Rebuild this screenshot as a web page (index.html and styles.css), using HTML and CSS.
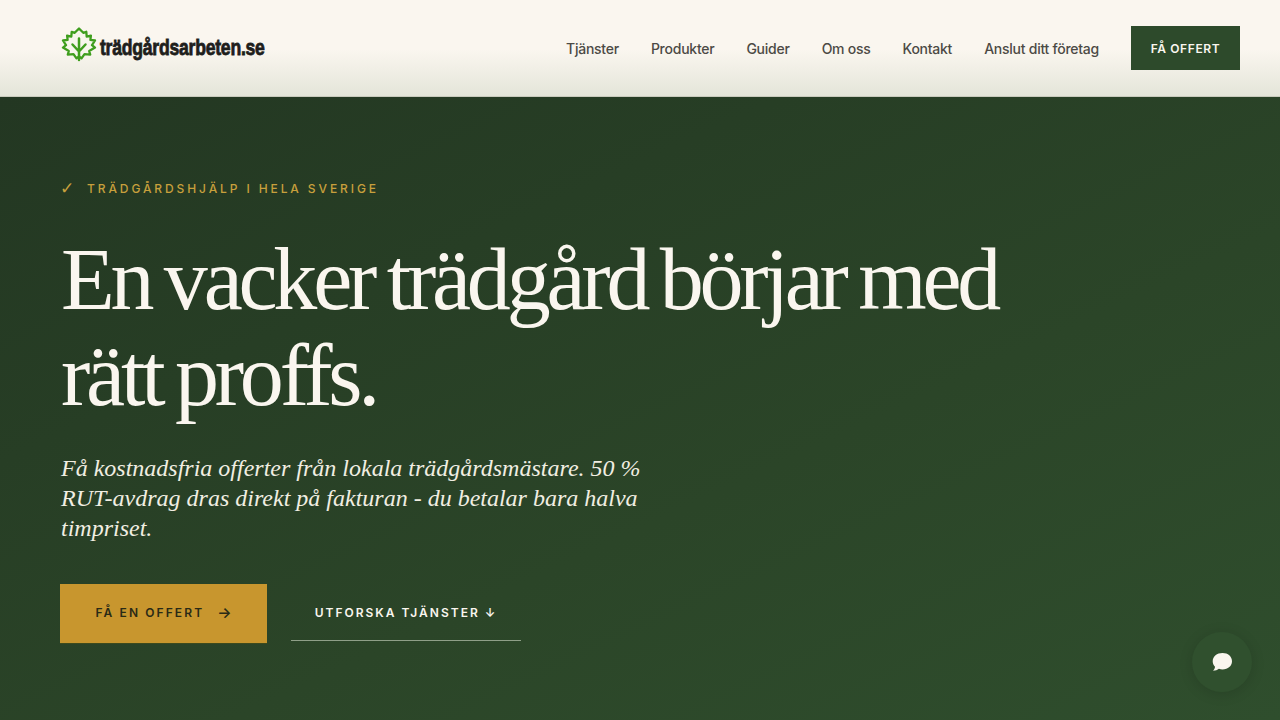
FILE: index.html
```html
<!DOCTYPE html>
<html lang="sv">
<head>
<meta charset="utf-8">
<meta name="viewport" content="width=device-width, initial-scale=1.0">
<title>trädgårdsarbeten.se</title>
<link rel="stylesheet" href="styles.css">
</head>
<body>
	<header class="site_header">
		<a class="logo" href="#">
			<svg class="logo_icon" viewBox="0 0 36 36" width="36" height="36" aria-hidden="true">
				<path d="M18 1.500l4.300 4.300 3-1 .4 4.800 4.200-1-.5 4.300 4.600.6-3 4.700 3 2.400-5.800 3.400 1 3.600-5.700-.5-3 4.300-2.500-2-2.500 2-3-4.300-5.700.5 1-3.600-5.800-3.400 3-2.400-3-4.700 4.600-.6-.5-4.300 4.200 1 .4-4.800 3 1z" fill="#f7f6ec" stroke="#3f9e1e" stroke-width="2.300" stroke-linejoin="round"/>
				<path d="M18 33V11.500M18 24.500l-6.500-7M18 24.500l6.500-7" fill="none" stroke="#3f9e1e" stroke-width="2.500" stroke-linecap="round"/>
			</svg>
			<span class="logo_text">trädgårdsarbeten.se</span>
		</a>
		<nav class="main_nav">
			<a href="#">Tjänster</a>
			<a href="#">Produkter</a>
			<a href="#">Guider</a>
			<a href="#">Om oss</a>
			<a href="#">Kontakt</a>
			<a href="#">Anslut ditt företag</a>
			<a class="nav_cta" href="#">FÅ OFFERT</a>
		</nav>
	</header>

	<main class="hero">
		<p class="eyebrow"><span class="eyebrow_check">✓</span>TRÄDGÅRDSHJÄLP I HELA SVERIGE</p>
		<h1 class="hero_title">En vacker trädgård börjar med rätt proffs.</h1>
		<p class="hero_lead">Få kostnadsfria offerter från lokala trädgårdsmästare. 50 % RUT-avdrag dras direkt på fakturan - du betalar bara halva timpriset.</p>
		<div class="hero_actions">
			<a class="btn_primary" href="#">FÅ EN OFFERT <span class="btn_arrow">→</span></a>
			<a class="btn_ghost" href="#">UTFORSKA TJÄNSTER ↓</a>
		</div>
	</main>

	<button class="chat_btn" type="button" aria-label="Chatt">
		<svg viewBox="0 0 24 24" width="24" height="24" aria-hidden="true">
			<path d="M12.500 3C18 3 22 6.500 22 11.200S18 19.400 12.500 19.400c-1.300 0-2.500-.2-3.600-.6C7.500 20 5.500 20.800 3 20.800c1-1 1.900-2.500 2-4.100C3.500 15.200 2.700 13.300 2.700 11.200 2.700 6.500 7 3 12.500 3z" fill="#faf6ef"/>
		</svg>
	</button>
</body>
</html>
```

FILE: styles.css
```css
* {
	box-sizing: border-box;
}

html, body {
	margin: 0;
	padding: 0;
	height: 100%;
	overflow: hidden;
}

body {
	display: flex;
	flex-direction: column;
	font-family: "Inter", sans-serif;
	background-color: #2d4a2b;
}

a {
	text-decoration: none;
}

.site_header {
	display: flex;
	align-items: center;
	justify-content: space-between;
	height: 97px;
	padding: 0 40px 0 61px;
	background: linear-gradient(to bottom, #faf6ef 0%, #faf6ef 52%, #e4e5d9 100%);
	border-bottom: 1px solid #c9cbbd;
}

.logo {
	display: flex;
	align-items: center;
	gap: 3px;
}

.logo_icon {
	margin-bottom: 7px;
}

.logo_text {
	font-family: "Liberation Sans", sans-serif;
	font-weight: 700;
	font-size: 22px;
	letter-spacing: -0.3px;
	color: #1e1e1c;
	-webkit-text-stroke: 0.8px #1e1e1c;
	transform: scaleX(0.8);
	transform-origin: left center;
	margin-right: -41px;
}

.main_nav {
	display: flex;
	align-items: center;
	gap: 32px;
}

.main_nav a {
	font-size: 14px;
	font-weight: 500;
	letter-spacing: -0.25px;
	color: #4c4a45;
}

.main_nav .nav_cta {
	display: flex;
	align-items: center;
	justify-content: center;
	width: 109px;
	height: 44px;
	background-color: #2d4a2b;
	color: #faf6ef;
	font-size: 12px;
	font-weight: 600;
	letter-spacing: 0.6px;
}

.hero {
	flex: 1;
	padding: 81px 60px 0;
	background: linear-gradient(155deg, #233722 0%, #2b4528 60%, #2f4e2d 100%);
}

.eyebrow {
	display: flex;
	align-items: center;
	margin: 0;
	height: 20px;
	font-size: 12px;
	font-weight: 500;
	letter-spacing: 2.9px;
	color: #c8a03c;
}

.eyebrow_check {
	width: 27px;
	font-family: "DejaVu Sans", sans-serif;
	font-size: 17px;
	letter-spacing: 0;
}

.hero_title {
	max-width: 980px;
	margin: 34px 0 0 1px;
	font-family: "Liberation Serif", serif;
	font-weight: 400;
	font-size: 88px;
	line-height: 96px;
	letter-spacing: -4.2px;
	word-spacing: -4.3px;
	color: #faf6ef;
}

.hero_lead {
	max-width: 600px;
	margin: 29px 0 0 1px;
	font-family: "Liberation Serif", serif;
	font-style: italic;
	font-size: 24px;
	line-height: 30px;
	color: #f1eee2;
}

.hero_actions {
	display: flex;
	align-items: flex-start;
	gap: 24px;
	margin-top: 41px;
}

.btn_primary {
	display: flex;
	align-items: center;
	justify-content: center;
	gap: 13px;
	width: 207px;
	height: 59px;
	padding-bottom: 3px;
	background-color: #c8962e;
	color: #2a2a16;
	font-size: 12px;
	font-weight: 600;
	letter-spacing: 2.1px;
	box-shadow: 0 1px 0 #3d4a1d;
}

.btn_arrow {
	letter-spacing: 0;
	font-size: 15px;
}

.btn_ghost {
	display: flex;
	align-items: center;
	justify-content: center;
	width: 230px;
	height: 57px;
	border-bottom: 1px solid #8f9f88;
	color: #faf6ef;
	font-size: 12px;
	font-weight: 600;
	letter-spacing: 2px;
}

.chat_btn {
	position: fixed;
	right: 28px;
	bottom: 28px;
	display: flex;
	align-items: center;
	justify-content: center;
	width: 60px;
	height: 60px;
	padding: 0;
	border: 0;
	border-radius: 50%;
	background-color: #30502e;
	box-shadow: 0 2px 14px rgba(0, 0, 0, 0.14);
}
```
